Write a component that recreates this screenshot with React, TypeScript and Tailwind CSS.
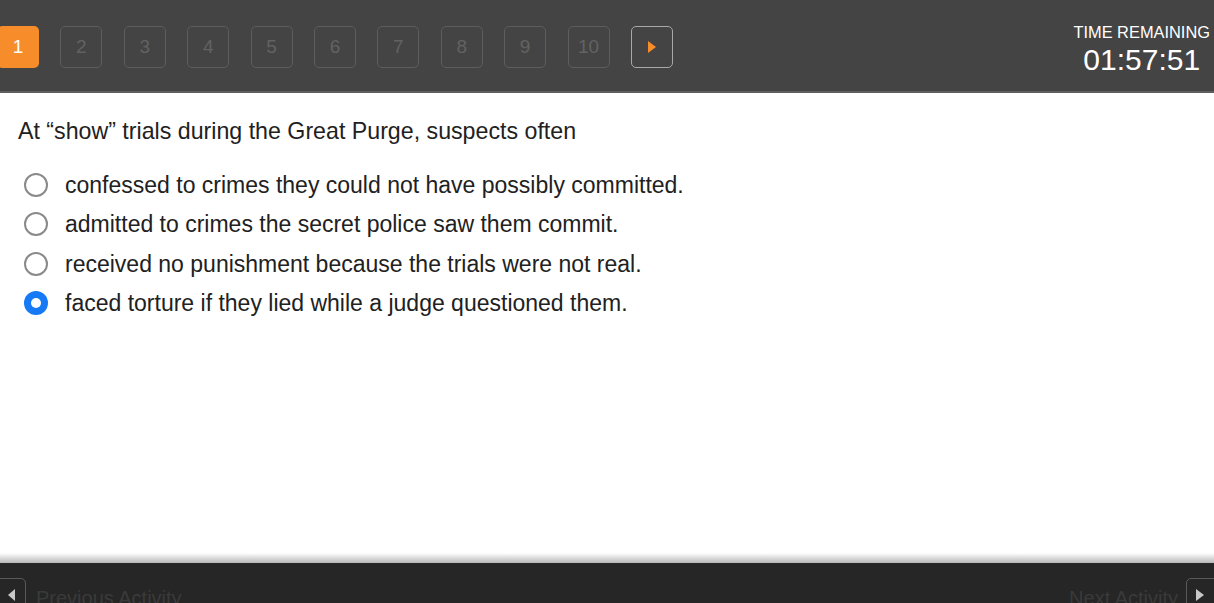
import React from "react";

const options = [
  "confessed to crimes they could not have possibly committed.",
  "admitted to crimes the secret police saw them commit.",
  "received no punishment because the trials were not real.",
  "faced torture if they lied while a judge questioned them.",
];

export default function App() {
  const selected = 3;
  return (
    <div
      className="w-[1214px] h-[603px] overflow-hidden bg-white flex flex-col"
      style={{ fontFamily: '"Liberation Sans", Arial, sans-serif' }}
    >
      {/* Header */}
      <div className="h-[93px] shrink-0 bg-[#444444] border-b-2 border-[#5e5e5e] flex items-start justify-between">
        <div className="flex gap-[21.4px] ml-[-3px] mt-[26px]">
          <div className="w-[42px] h-[42px] rounded-[5px] bg-[#f68d2a] text-white text-[19px] flex items-center justify-center">
            1
          </div>
          {[2, 3, 4, 5, 6, 7, 8, 9, 10].map((n) => (
            <div
              key={n}
              className="w-[42px] h-[42px] rounded-[5px] border border-[#5d5d5d] text-[#626262] text-[19px] flex items-center justify-center"
            >
              {n}
            </div>
          ))}
          <div className="w-[42px] h-[42px] rounded-[5px] border border-[#a8a8a8] flex items-center justify-center">
            <svg width="10" height="14" viewBox="0 0 10 14">
              <polygon points="1,1 9,7 1,13" fill="#f68d2a" />
            </svg>
          </div>
        </div>
        <div className="mt-[22px] mr-[4px] flex flex-col items-center text-white">
          <div className="text-[16.4px] leading-[20px]">TIME REMAINING</div>
          <div className="text-[30px] leading-[34px] mt-[1px]">01:57:51</div>
        </div>
      </div>

      {/* Question */}
      <div className="flex-1 pt-[24px] pl-[18px] text-[#212121]">
        <p className="text-[23.2px] leading-[28px]">
          At “show” trials during the Great Purge, suspects often
        </p>
        <div className="mt-[20px] flex flex-col">
          {options.map((o, i) => (
            <label key={i} className="flex items-center h-[39.5px]">
              {i === selected ? (
                <span className="ml-[6px] w-[24px] h-[24px] rounded-full bg-[#1679f6] flex items-center justify-center">
                  <span className="w-[10px] h-[10px] rounded-full bg-white" />
                </span>
              ) : (
                <span className="ml-[6px] w-[24px] h-[24px] rounded-full border-2 border-[#8a8a8a] bg-white" />
              )}
              <span className="ml-[17px] text-[23px] leading-[28px]">{o}</span>
            </label>
          ))}
        </div>
      </div>

      {/* Footer */}
      <div className="h-[10px] shrink-0 bg-gradient-to-b from-white to-[#b8b8b8]" />
      <div className="h-[40px] shrink-0 bg-[#262626] flex items-start justify-between pt-[12px]">
        <div className="flex items-center">
          <div className="ml-[-6px] w-[32px] h-[34px] rounded-[5px] border border-[#5a5a5a] flex items-center justify-center">
            <svg width="8" height="12" viewBox="0 0 8 12" className="ml-[4px]">
              <polygon points="7,0 0,6 7,12" fill="#c8c8c8" />
            </svg>
          </div>
          <span className="ml-[10px] text-[20px] leading-[34px] text-[#3a3a3a] pt-[6px]">Previous Activity</span>
        </div>
        <div className="flex items-center">
          <span className="mr-[8px] text-[20px] leading-[34px] text-[#3a3a3a] pt-[6px]">Next Activity</span>
          <div className="mr-[-6px] w-[34px] h-[34px] rounded-[5px] border border-[#5a5a5a] flex items-center justify-center">
            <svg width="8" height="12" viewBox="0 0 8 12" className="mr-[6px]">
              <polygon points="0,0 8,6 0,12" fill="#c8c8c8" />
            </svg>
          </div>
        </div>
      </div>
    </div>
  );
}
